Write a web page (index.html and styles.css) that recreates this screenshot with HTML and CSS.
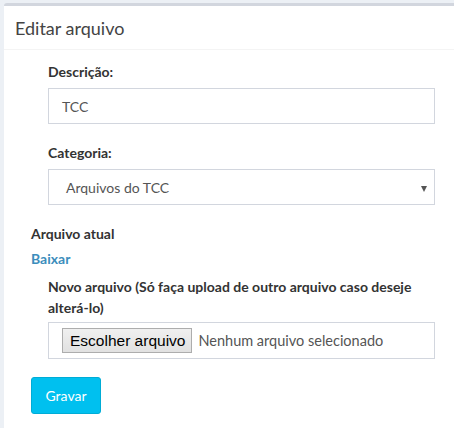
FILE: index.html
```html
<!DOCTYPE html>
<html lang="pt-BR">
<head>
<meta charset="utf-8">
<title>Editar arquivo</title>
<link rel="stylesheet" href="styles.css">
</head>
<body>
<div class="box">
  <div class="box-header">
    <h3 class="box-title">Editar arquivo</h3>
  </div>
  <form class="box-body">
    <div class="inner">
      <div class="form-group">
        <label class="label">Descrição:</label>
        <div class="control">TCC</div>
      </div>
      <div class="form-group">
        <label class="label">Categoria:</label>
        <div class="control select">
          <span class="select-text">Arquivos do TCC</span>
          <span class="caret"></span>
        </div>
      </div>
    </div>
    <div class="current">
      <div class="label">Arquivo atual</div>
      <a class="link" href="#">Baixar</a>
    </div>
    <div class="inner">
      <div class="form-group file-group">
        <label class="label">Novo arquivo (Só faça upload de outro arquivo caso deseje alterá-lo)</label>
        <div class="control file">
          <span class="file-btn">Escolher arquivo</span>
          <span class="file-name">Nenhum arquivo selecionado</span>
        </div>
      </div>
    </div>
    <div class="actions">
      <button type="button" class="btn">Gravar</button>
    </div>
  </form>
</div>
</body>
</html>
```
FILE: styles.css
```css
html, body {
  margin: 0;
  padding: 0;
}
body {
  background: #ecf0f5;
  font-family: Lato, "Open Sans", sans-serif;
  font-size: 14px;
  color: #333;
  height: 428px;
  overflow: hidden;
}
.box {
  margin: 3px 0 0 4px;
  background: #fff;
  border-top: 3px solid #d2d6de;
  border-radius: 3px 0 0 3px;
  height: 430px;
}
.box-header {
  height: 43px;
  border-bottom: 1px solid #f4f4f4;
  padding: 0 11px;
  display: flex;
  align-items: center;
}
.box-title {
  margin: 0;
  font-size: 18px;
  font-weight: 400;
  color: #444;
  line-height: 20px;
  padding-top: 1px;
}
.box-body {
  padding: 12px 19px 0 27px;
  display: flex;
  flex-direction: column;
}
.inner {
  padding-left: 17px;
}
.form-group {
  margin-bottom: 19px;
}
.label {
  display: block;
  font-weight: 700;
  line-height: 20px;
  margin-bottom: 6px;
}
.control {
  box-sizing: border-box;
  height: 36px;
  border: 1px solid #d2d6de;
  padding: 0 13px;
  display: flex;
  align-items: center;
  color: #555;
  font-size: 14px;
}
.select {
  position: relative;
  padding-left: 17px;
}
.select-text {
  flex: 1;
}
.caret {
  position: absolute;
  right: 7px;
  top: 16px;
  width: 0;
  height: 0;
  border-left: 3.5px solid transparent;
  border-right: 3.5px solid transparent;
  border-top: 6px solid #555;
}
.current {
  display: flex;
  flex-direction: column;
  margin-bottom: 7px;
}
.current .label {
  margin-bottom: 5px;
}
.link {
  color: #3c8dbc;
  font-weight: 700;
  text-decoration: none;
  line-height: 20px;
}
.file-group {
  margin-bottom: 18px;
}
.file-group .label {
  margin-bottom: 4px;
  line-height: 21px;
}
.file {
  height: 37px;
  gap: 6px;
}
.file-btn {
  box-sizing: border-box;
  height: 25px;
  padding: 0 6px 0 7px;
  border: 1px solid #adadad;
  background: linear-gradient(#f0f0f0, #e1e1e1);
  color: #000;
  font-family: "Liberation Sans", Arial, sans-serif;
  font-size: 15.5px;
  line-height: 23px;
  display: flex;
  align-items: center;
}
.file-name {
  color: #555;
  font-size: 14.5px;
}
.actions {
  display: flex;
}
.btn {
  height: 37px;
  width: 70px;
  border: 1px solid #00acd6;
  background: #00c0ef;
  color: #fff;
  border-radius: 3px;
  font-family: Lato, "Open Sans", sans-serif;
  font-size: 14px;
  padding: 0;
}
```
